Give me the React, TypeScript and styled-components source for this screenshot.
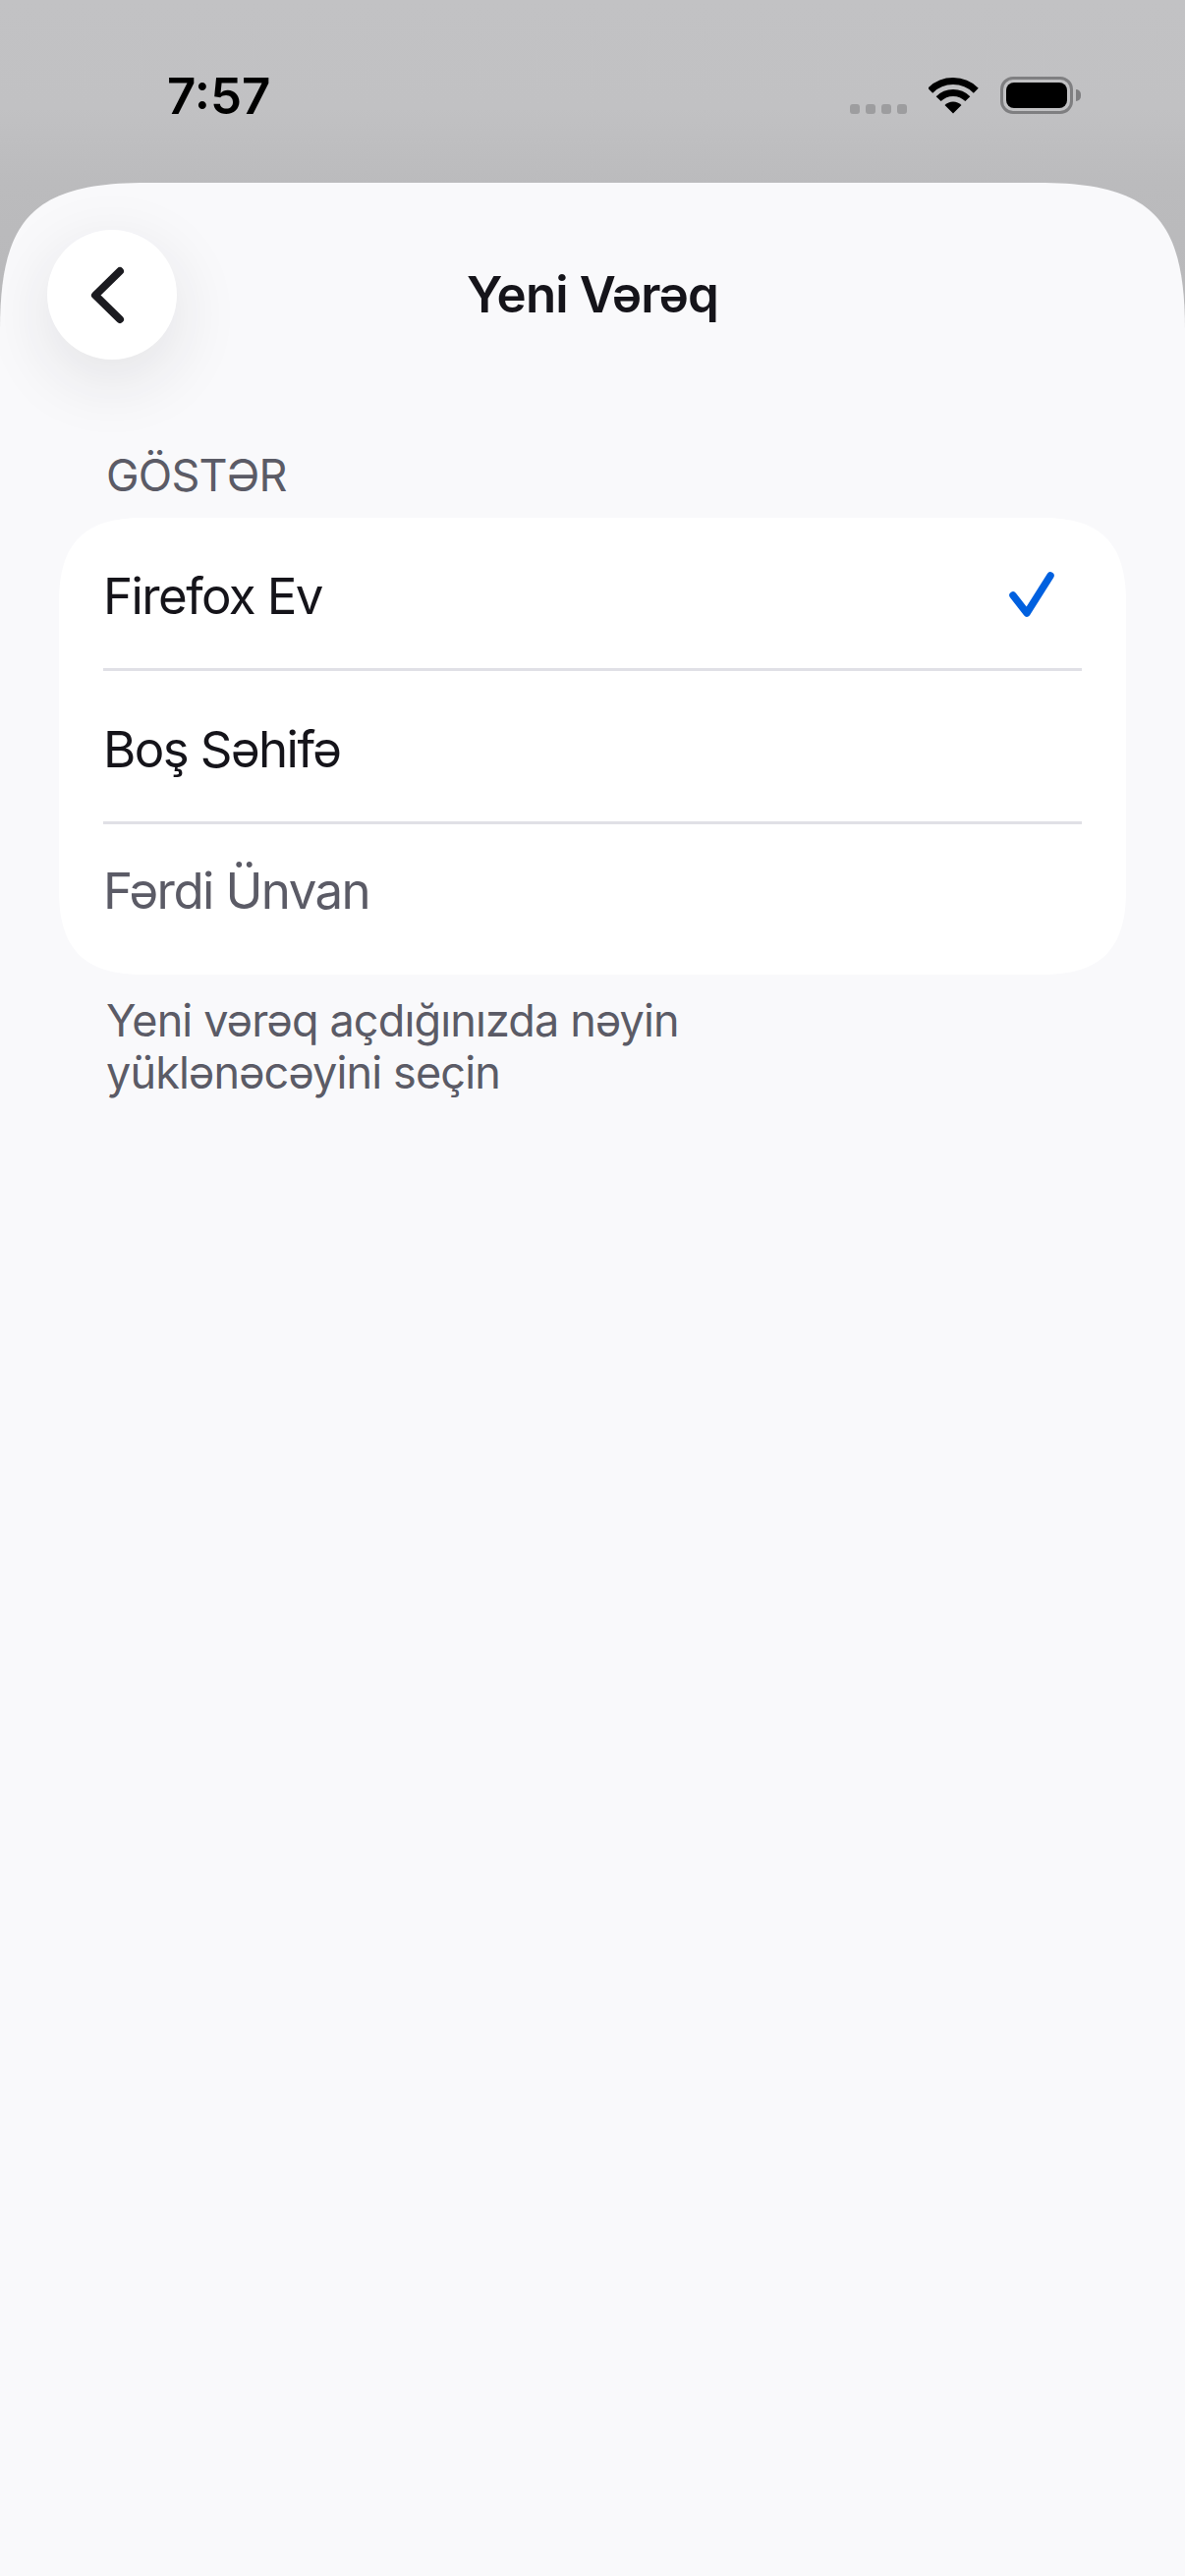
import React from "react";
import styled, { createGlobalStyle } from "styled-components";

const rows = [
  { id: "home", label: "Firefox Ev", selected: true },
  { id: "blank", label: "Boş Səhifə" },
  { id: "custom", label: "Fərdi Ünvan", muted: true },
];

const App = () => {
  return (
    <Screen>
      <GlobalStyle />
      <StatusBar>
        <Time>7:57</Time>
        <StatusIcons>
          <Dots>
            <i />
            <i />
            <i />
            <i />
          </Dots>
          <svg width="51" height="37" viewBox="0 0 51 37" fill="none">
            <path d="M1.7 13.2A33 33 0 0 1 48.3 13.2" stroke="#000" strokeWidth="7" />
            <path d="M10.15 21.65A21 21 0 0 1 39.85 21.65" stroke="#000" strokeWidth="7" />
            <path d="M25 36.5L16.5 28A12 12 0 0 1 33.5 28Z" fill="#000" />
          </svg>
          <Battery>
            <BatteryFill />
          </Battery>
        </StatusIcons>
      </StatusBar>
      <Sheet>
        <Header>
          <BackButton aria-label="Geri">
            <svg width="40" height="60" viewBox="0 0 40 60" fill="none">
              <path
                d="M33 6L8 30.5L33 55"
                stroke="#1b1b20"
                strokeWidth="8"
                strokeLinecap="round"
                strokeLinejoin="round"
              />
            </svg>
          </BackButton>
          <Title>Yeni Vərəq</Title>
        </Header>
        <SectionLabel>GÖSTƏR</SectionLabel>
        <Card>
          {rows.map((row, i) => (
            <Row key={row.id} $last={i === rows.length - 1}>
              <RowLabel $muted={row.muted}>{row.label}</RowLabel>
              {row.selected && (
                <svg width="50" height="50" viewBox="0 0 50 50" fill="none">
                  <path
                    d="M6 25L20 43L44 5"
                    stroke="#0060df"
                    strokeWidth="7.5"
                    strokeLinecap="round"
                    strokeLinejoin="round"
                  />
                </svg>
              )}
            </Row>
          ))}
        </Card>
        <Footnote>
          Yeni vərəq açdığınızda nəyin
          <br />
          yüklənəcəyini seçin
        </Footnote>
      </Sheet>
    </Screen>
  );
};

const GlobalStyle = createGlobalStyle`
  html, body {
    margin: 0;
    padding: 0;
    background: #f9f9fb;
  }
  body {
    font-family: Inter, "Liberation Sans", sans-serif;
  }
`;

const Screen = styled.div`
  width: 1206px;
  height: 2622px;
  overflow: hidden;
  display: flex;
  flex-direction: column;
  background: linear-gradient(#c2c2c4 0, #c1c1c3 110px, #bbbbbd 186px, #b8b8ba 340px);
`;

const StatusBar = styled.div`
  height: 186px;
  flex-shrink: 0;
  box-sizing: border-box;
  padding: 68px 106px 0 170px;
  display: flex;
  justify-content: space-between;
  align-items: flex-start;
`;

const Time = styled.div`
  font-size: 51px;
  line-height: 60px;
  font-weight: 600;
  color: #000;
`;

const StatusIcons = styled.div`
  display: flex;
  align-items: flex-end;
  gap: 22px;
  padding-top: 10px;
  height: 38px;
`;

const Dots = styled.div`
  display: flex;
  gap: 6px;

  i {
    width: 10px;
    height: 10px;
    border-radius: 3px;
    background: #9d9d9f;
  }
`;

const Battery = styled.div`
  position: relative;
  width: 74px;
  height: 38px;
  box-sizing: border-box;
  margin-right: 8px;
  border: 3px solid #7f7f81;
  border-radius: 13px;
  padding: 3px;

  &::after {
    content: "";
    position: absolute;
    right: -11px;
    top: 10px;
    width: 5px;
    height: 12px;
    background: #7f7f81;
    border-radius: 0 6px 6px 0;
  }
`;

const BatteryFill = styled.div`
  height: 100%;
  background: #000;
  border-radius: 8px;
`;

const Sheet = styled.div`
  flex: 1;
  background: #f9f9fb;
  clip-path: path("M0,150 C0,35 35,0 150,0 L1056,0 C1171,0 1206,35 1206,150 L1206,2436 L0,2436 Z");
`;

const Header = styled.div`
  display: grid;
  grid-template-columns: 132px 1fr 132px;
  align-items: center;
  padding: 48px 48px 0 48px;
`;

const BackButton = styled.button`
  width: 132px;
  height: 132px;
  padding: 0 10px 0 0;
  border: none;
  border-radius: 50%;
  background: #fff;
  box-shadow: 0 20px 70px rgba(40, 40, 50, 0.11);
  display: flex;
  align-items: center;
  justify-content: center;
`;

const Title = styled.h1`
  margin: 0;
  text-align: center;
  font-size: 51px;
  line-height: 60px;
  font-weight: 600;
  letter-spacing: -0.85px;
  color: #15141a;
`;

const SectionLabel = styled.div`
  margin: 91px 0 16px;
  padding-left: 108px;
  font-size: 45px;
  line-height: 54px;
  letter-spacing: -0.8px;
  color: #5b5b66;
`;

const Card = styled.div`
  margin: 0 60px;
  height: 465px;
  background: #fff;
  clip-path: path("M0,85 C0,26 26,0 85,0 L1001,0 C1060,0 1086,26 1086,85 L1086,380 C1086,439 1060,465 1001,465 L85,465 C26,465 0,439 0,380 Z");
`;

const Row = styled.div<{ $last?: boolean }>`
  height: ${(p) => (p.$last ? "153px" : "156px")};
  box-sizing: border-box;
  margin: 0 45px;
  padding: ${(p) => (p.$last ? "0 26px 18px 0" : "5px 26px 0 0")};
  display: flex;
  align-items: center;
  justify-content: space-between;
  border-bottom: ${(p) => (p.$last ? "none" : "3px solid #e0e0e6")};
`;

const RowLabel = styled.span<{ $muted?: boolean }>`
  position: relative;
  top: ${(p) => (p.$muted ? "0" : "1px")};
  font-size: 51px;
  line-height: 60px;
  letter-spacing: -1.6px;
  color: ${(p) => (p.$muted ? "#5b5b66" : "#15141a")};
`;

const Footnote = styled.p`
  margin: 20px 0 0;
  padding-left: 108px;
  font-size: 45px;
  line-height: 53px;
  letter-spacing: -0.85px;
  color: #5b5b66;
`;

export default App;
